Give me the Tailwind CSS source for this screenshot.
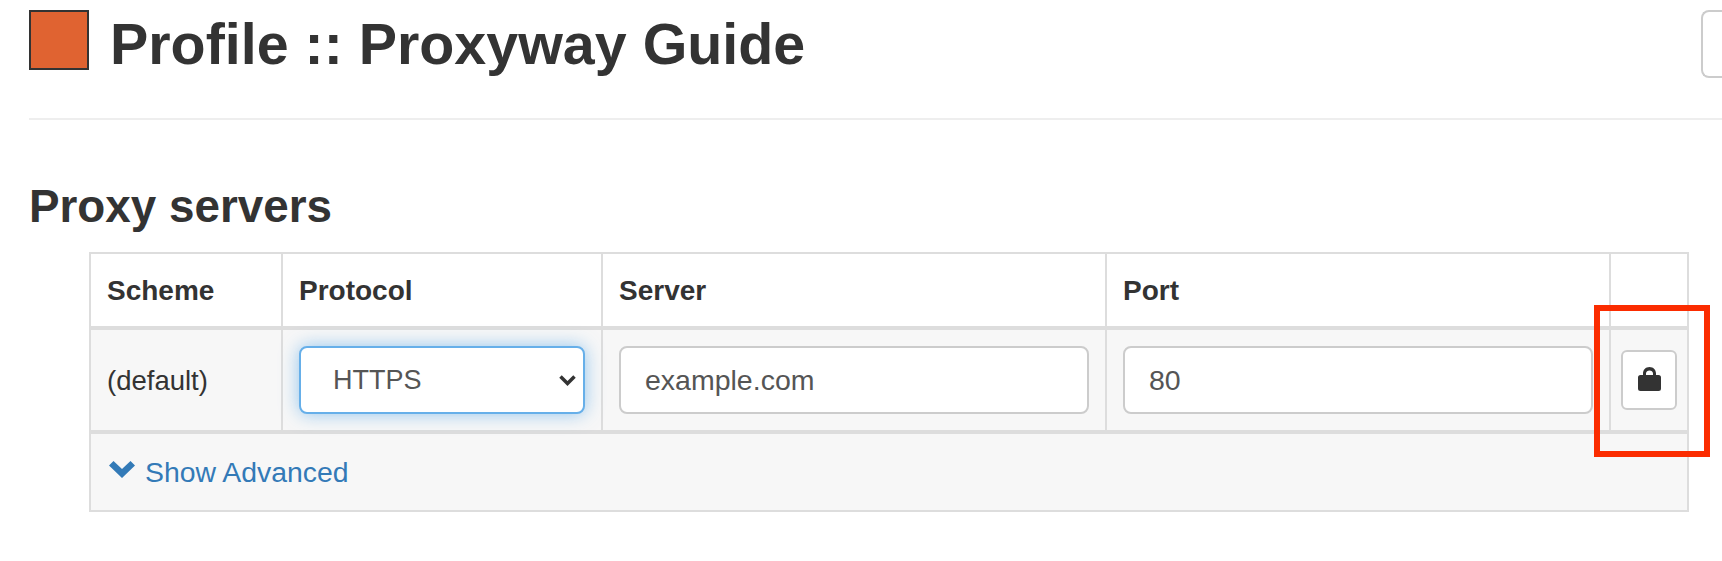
<!DOCTYPE html>
<html lang="en">
<head>
    <meta charset="UTF-8">
    <title>Profile :: Proxyway Guide</title>
    <script src="https://cdn.jsdelivr.net/npm/@tailwindcss/browser@4"></script>
</head>
<body class="relative w-[1722px] h-[561px] overflow-hidden bg-white text-[#333] font-['Liberation_Sans',sans-serif]">
    <!-- Page header -->
    <div class="ml-[29px] h-[120px] pt-[10px] flex items-start border-b-2 border-[#eee]">
        <div class="w-[60px] h-[60px] border-2 border-[#333] bg-[#e06331]"></div>
        <h1 class="ml-[21px] mt-[2px] text-[57.400px] leading-[64px] font-bold">Profile :: Proxyway Guide</h1>
        <button class="ml-auto w-[21px] h-[68px] border-2 border-r-0 border-[#ccc] rounded-l-lg bg-white"></button>
    </div>

    <!-- Proxy servers -->
    <h2 class="ml-[29px] mt-[62px] text-[45.800px] leading-[50px] font-bold">Proxy servers</h2>
    <table class="ml-[89px] mt-[20px] w-[1600px] table-fixed border-separate border-spacing-0 text-[27.500px]">
        <colgroup>
            <col class="w-[194px]"><col class="w-[320px]"><col class="w-[504px]"><col class="w-[504px]"><col class="w-[78px]">
        </colgroup>
        <thead>
            <tr class="text-[28px] text-left">
                <th class="h-[78px] px-4 pt-[2px] border-2 border-b-4 border-[#ddd]">Scheme</th>
                <th class="h-[78px] px-4 pt-[2px] border-t-2 border-r-2 border-b-4 border-[#ddd]">Protocol</th>
                <th class="h-[78px] px-4 pt-[2px] border-t-2 border-r-2 border-b-4 border-[#ddd]">Server</th>
                <th class="h-[78px] px-4 pt-[2px] border-t-2 border-r-2 border-b-4 border-[#ddd]">Port</th>
                <th class="h-[78px] border-t-2 border-r-2 border-b-4 border-[#ddd]"></th>
            </tr>
        </thead>
        <tbody class="bg-[#f7f7f7]">
            <tr>
                <td class="h-[104px] px-4 pt-[2px] border-l-2 border-r-2 border-b-4 border-[#ddd]">(default)</td>
                <td class="h-[104px] px-4 border-r-2 border-b-4 border-[#ddd]">
                    <div class="relative">
                        <select class="w-full h-[68px] pl-[32px] pt-[1px] appearance-none text-[27px] bg-white text-[#555] border-2 border-[#66afe9] rounded-lg shadow-[0_0_18px_rgba(102,175,233,0.7)] outline-none">
                            <option>HTTPS</option>
                        </select>
                        <svg class="absolute right-[8px] top-[28px] w-[19px] h-[13px]" viewBox="0 0 19 13"><path d="M2.500 2.500l7 7 7-7" fill="none" stroke="#333" stroke-width="3.500"/></svg>
                    </div>
                </td>
                <td class="h-[104px] px-4 border-r-2 border-b-4 border-[#ddd]">
                    <input class="w-full h-[68px] px-[24px] text-[28.500px] bg-white text-[#555] border-2 border-[#ccc] rounded-lg" value="example.com">
                </td>
                <td class="h-[104px] px-4 border-r-2 border-b-4 border-[#ddd]">
                    <input class="w-full h-[68px] px-[24px] text-[28.500px] bg-white text-[#555] border-2 border-[#ccc] rounded-lg" value="80">
                </td>
                <td class="h-[104px] px-[10px] border-r-2 border-b-4 border-[#ddd]">
                    <button class="w-[56px] h-[60px] flex items-center justify-center bg-white border-2 border-[#ccc] rounded-md">
                        <svg class="w-[23px] h-[24px] -mt-[3px]" viewBox="0 0 23 24"><path fill="#333" fill-rule="evenodd" d="M5 8V6.500C5 2.900 7.600 0 11.500 0S18 2.900 18 6.500V8h2.500A2.500 2.500 0 0 1 23 10.500V21.500A2.500 2.500 0 0 1 20.500 24H2.500A2.500 2.500 0 0 1 0 21.500V10.500A2.500 2.500 0 0 1 2.500 8zM8 8h7V6.500C15 4.800 13.300 3.500 11.500 3.500S8 4.800 8 6.500z"/></svg>
                    </button>
                </td>
            </tr>
        </tbody>
        <tfoot class="bg-[#f7f7f7]">
            <tr>
                <td colspan="5" class="h-[78px] px-[18px] border-l-2 border-r-2 border-b-2 border-[#ddd]">
                    <a href="#" class="flex items-center gap-[10px] text-[28.400px] text-[#337ab7]">
                        <svg class="w-[26px] h-[17px] -mt-[4px]" viewBox="0 0 26 17"><path fill="#337ab7" d="M0 4.500L4.500 0 13 8l8.500-8L26 4.500 13 17z"/></svg>
                        Show Advanced
                    </a>
                </td>
            </tr>
        </tfoot>
    </table>

    <!-- Red annotation box over the lock button -->
    <div class="absolute left-[1594px] top-[305px] w-[116px] h-[152px] border-[6px] border-[#fb2c00]"></div>
</body>
</html>
